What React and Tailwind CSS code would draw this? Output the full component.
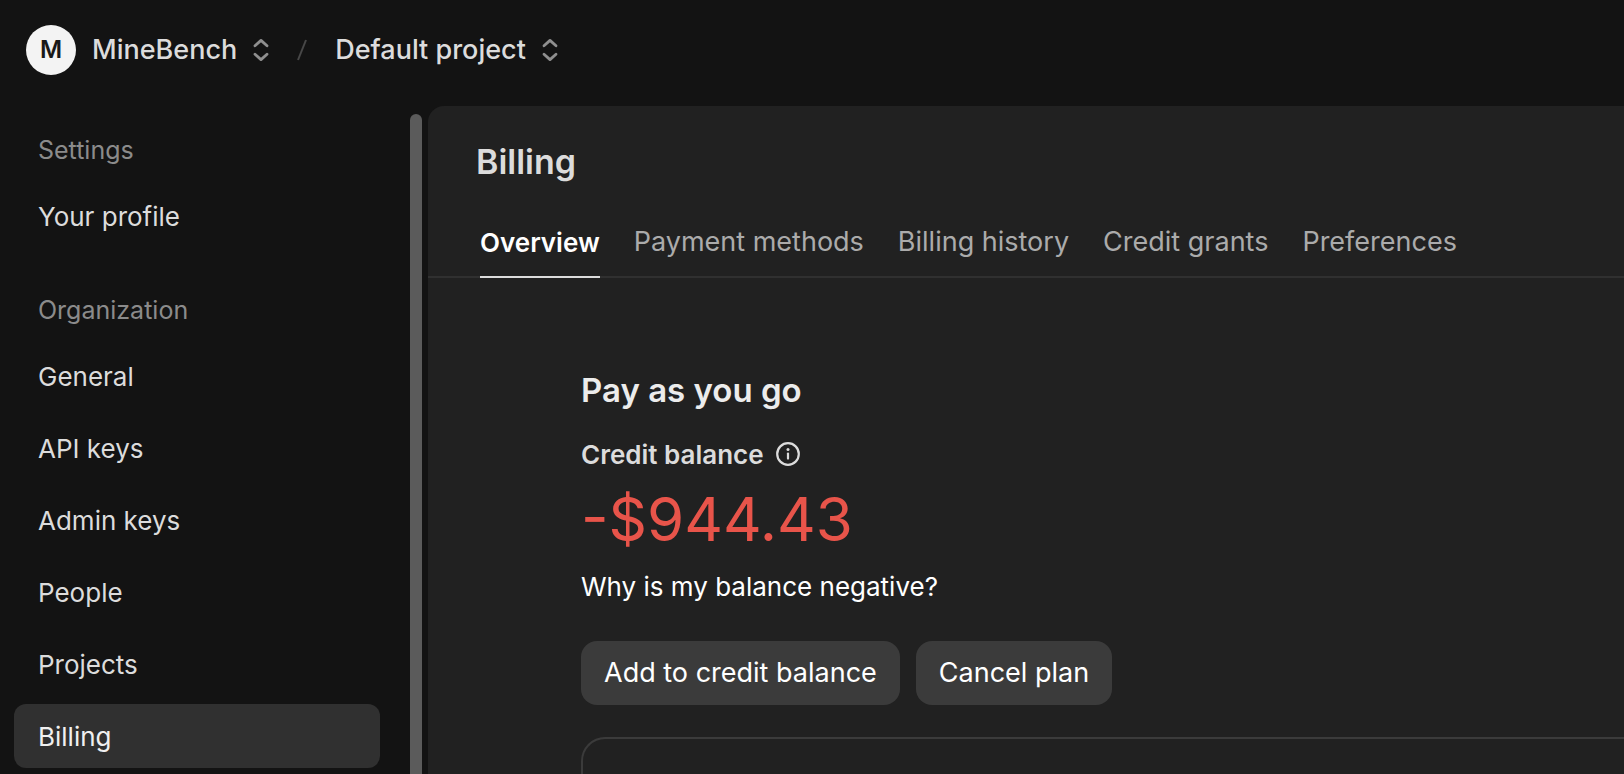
const navSections = [
  { title: "Settings", items: ["Your profile"] },
  {
    title: "Organization",
    items: ["General", "API keys", "Admin keys", "People", "Projects", "Billing"],
  },
];

const tabs = ["Overview", "Payment methods", "Billing history", "Credit grants", "Preferences"];

function ChevronUpDown() {
  return (
    <svg
      viewBox="0 0 16 24"
      className="h-6 w-4 shrink-0 text-[#8f8f8f]"
      fill="none"
      stroke="currentColor"
      strokeWidth="2.8"
      strokeLinecap="round"
      strokeLinejoin="round"
      aria-hidden="true"
    >
      <path d="M2 7.800 8 2.400l6 5.400" />
      <path d="M2 16.200 8 21.600l6-5.400" />
    </svg>
  );
}

function InfoIcon() {
  return (
    <svg viewBox="0 0 24 24" className="h-6 w-6" fill="none" aria-hidden="true">
      <circle cx="12" cy="12" r="10.800" stroke="currentColor" strokeWidth="2.200" />
      <circle cx="12" cy="7.600" r="1.500" fill="currentColor" />
      <path d="M12 11.600v5" stroke="currentColor" strokeWidth="2.200" strokeLinecap="round" />
    </svg>
  );
}

function Header() {
  return (
    <header className="flex h-[106px] shrink-0 items-start px-[26px] pt-[25px] text-[27px] font-medium text-[#dcdcdc]">
      <div className="flex h-[50px] items-center">
        <button type="button" className="flex items-center">
          <span className="flex h-[50px] w-[50px] items-center justify-center rounded-full bg-[#f3f3f3] text-[24px] font-semibold text-[#181818]">
            M
          </span>
          <span className="mr-4 ml-4">MineBench</span>
          <ChevronUpDown />
        </button>
        <svg viewBox="0 0 12 22" className="mx-[27px] h-[22px] w-3" aria-hidden="true">
          <path d="M2 21 10 1" stroke="#484848" strokeWidth="2" />
        </svg>
        <button type="button" className="flex items-center gap-4">
          <span>Default project</span>
          <ChevronUpDown />
        </button>
      </div>
    </header>
  );
}

function Sidebar({ active }) {
  return (
    <aside className="flex w-[428px] shrink-0 justify-between overflow-hidden pt-2 pr-[6px] pl-[14px]">
      <nav className="w-[366px]">
        {navSections.map((section) => (
          <div key={section.title} className="mb-[26px]">
            <h2 className="flex h-[70px] items-center px-6 pt-1 text-[25px] text-[#8b8b8b]">
              {section.title}
            </h2>
            <ul className="flex flex-col gap-2">
              {section.items.map((item) => (
                <li key={item}>
                  <a
                    href="#"
                    className={`flex h-16 items-center rounded-xl px-6 text-[26px] ${
                      item === active ? "bg-[#303030] text-[#f0f0f0]" : "text-[#dcdcdc]"
                    }`}
                  >
                    {item}
                  </a>
                </li>
              ))}
            </ul>
          </div>
        ))}
      </nav>
      <div className="w-3 rounded-t-full bg-[#5b5b5b]" />
    </aside>
  );
}

function Tabs({ active }) {
  return (
    <nav className="flex gap-[34px] border-b-2 border-[#303030] pl-[52px] text-[27px]">
      {tabs.map((tab) => (
        <a
          key={tab}
          href="#"
          className={`-mb-[2px] flex h-[70px] items-center border-b-2 whitespace-nowrap ${
            tab === active
              ? "border-[#dcdcdc] text-[26px] font-semibold text-white"
              : "border-transparent text-[#ababab]"
          }`}
        >
          {tab}
        </a>
      ))}
    </nav>
  );
}

function Balance() {
  return (
    <section className="pt-[92px] pl-[153px]">
      <h2 className="text-[33px] leading-10 font-semibold text-[#ececec]">Pay as you go</h2>
      <div className="mt-6 flex h-10 items-center gap-3 text-[26px] font-semibold text-[#dcdcdc]">
        <span>Credit balance</span>
        <button type="button" aria-label="About credit balance">
          <InfoIcon />
        </button>
      </div>
      <p className="mt-2 text-[60px] leading-[74px] text-[#e8544a]">-$944.43</p>
      <a href="#" className="mt-[11px] block text-[26px] leading-10 text-white">
        Why is my balance negative?
      </a>
      <div className="mt-[34px] flex gap-4 text-[27px] text-white">
        <button type="button" className="h-16 rounded-2xl bg-[#3b3b3b] px-[23px]">
          Add to credit balance
        </button>
        <button type="button" className="h-16 rounded-2xl bg-[#3b3b3b] px-[23px]">
          Cancel plan
        </button>
      </div>
      <div className="mt-8 h-40 rounded-tl-3xl border-2 border-r-0 border-[#3b3b3b]" />
    </section>
  );
}

export default function App() {
  return (
    <div className="flex h-screen flex-col overflow-hidden bg-[#131313] font-['Inter',sans-serif]">
      <Header />
      <div className="flex min-h-0 flex-1">
        <Sidebar active="Billing" />
        <main className="min-w-0 flex-1 overflow-hidden rounded-tl-2xl bg-[#212121]">
          <h1 className="pt-9 pb-[26px] pl-12 text-[34px] leading-10 font-semibold text-[#dcdcdc]">
            Billing
          </h1>
          <Tabs active="Overview" />
          <Balance />
        </main>
      </div>
    </div>
  );
}
